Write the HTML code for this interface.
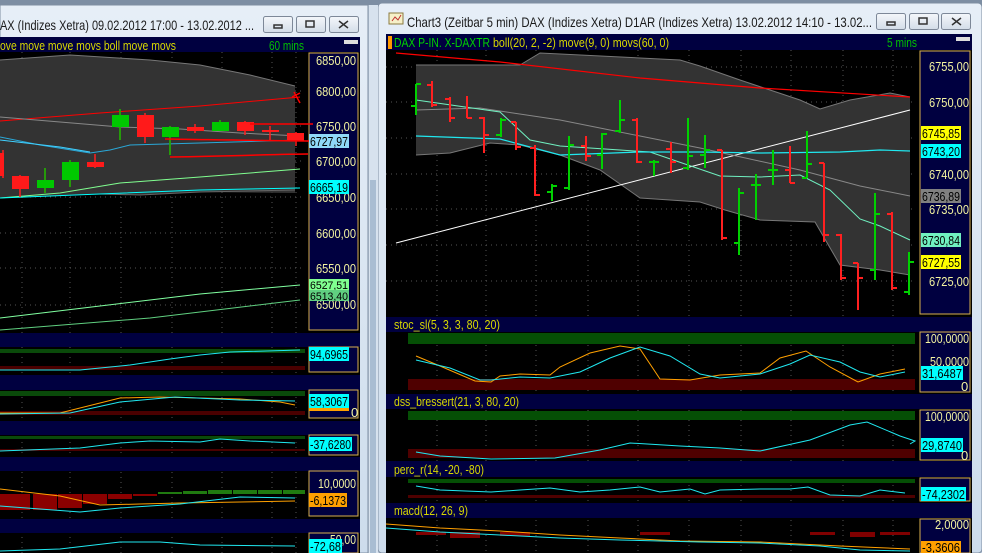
<!DOCTYPE html>
<html><head><meta charset="utf-8"><style>
html,body{margin:0;padding:0;background:#c8d6e4;}
svg{display:block;font-family:"Liberation Sans",sans-serif;}
</style></head><body>
<svg width="982" height="553" viewBox="0 0 982 553" xmlns="http://www.w3.org/2000/svg">
<defs>
<linearGradient id="fr" x1="0" y1="0" x2="0" y2="1"><stop offset="0" stop-color="#e6eef7"/><stop offset="1" stop-color="#cddcec"/></linearGradient>
<linearGradient id="bt" x1="0" y1="0" x2="0" y2="1"><stop offset="0" stop-color="#f4f7fb"/><stop offset="1" stop-color="#d3dde8"/></linearGradient>
</defs>
<rect x="0" y="0" width="982" height="553" fill="#bccadb"/>
<rect x="0" y="0" width="982" height="5" fill="#7d8ea3"/>
<rect x="0" y="5" width="368" height="548" fill="url(#fr)" stroke="#7e8ea2"/>
<rect x="378" y="3" width="604" height="550" rx="4" fill="url(#fr)" stroke="#7e8ea2"/>
<rect x="369" y="5" width="9" height="548" fill="#d7e2ee"/>
<rect x="370" y="180" width="6" height="373" fill="#a9bdd2"/>
<text x="0" y="30" font-size="14" fill="#1a1a1a" textLength="254" lengthAdjust="spacingAndGlyphs">AX (Indizes Xetra) 09.02.2012 17:00 - 13.02.2012 ...</text>
<text x="407" y="27" font-size="14" fill="#1a1a1a" textLength="465" lengthAdjust="spacingAndGlyphs">Chart3 (Zeitbar 5 min)  DAX (Indizes Xetra) D1AR (Indizes Xetra) 13.02.2012 14:10 - 13.02...</text>
<g stroke="#7d8898" fill="url(#bt)">
<rect x="263.5" y="16.5" width="29" height="16" rx="2"/><rect x="296.5" y="16.5" width="29" height="16" rx="2"/><rect x="329.5" y="16.5" width="29" height="16" rx="2"/>
<rect x="876.5" y="13.5" width="29" height="16" rx="2"/><rect x="909.5" y="13.5" width="29" height="16" rx="2"/><rect x="941.5" y="13.5" width="29" height="16" rx="2"/>
</g>
<g stroke="#333" fill="none" stroke-width="1.5">
<rect x="274" y="25" width="8" height="3"/><rect x="306" y="21" width="8" height="6"/><path d="M339 21l9 7M348 21l-9 7"/>
<rect x="887" y="22" width="8" height="3"/><rect x="919" y="18" width="8" height="6"/><path d="M952 18l9 7M961 18l-9 7"/>
</g>
<rect x="389" y="13" width="14" height="11" fill="#f6f0c8" stroke="#8a7a40"/><path d="M392 21l3-4 3 3 3-5" stroke="#c03030" fill="none"/>

<rect x="0" y="37" width="360" height="516" fill="#000"/>
<rect x="0" y="37" width="360" height="15" fill="#000040"/>
<text x="0" y="50" font-size="13" fill="#d8d800" textLength="176" lengthAdjust="spacingAndGlyphs">ove move move movs boll move movs</text>
<text x="269" y="50" font-size="13" fill="#00c000" textLength="35" lengthAdjust="spacingAndGlyphs">60 mins</text>
<rect x="344" y="40" width="14" height="4" fill="#ddd"/>
<rect x="309" y="53" width="49" height="277" fill="#000040" stroke="#d8b050"/>
<g stroke="#555" stroke-dasharray="1,4">
<path d="M22 52V553M70 52V553M121 52V553M172 52V553M222 52V553M272 52V553M296 52V553"/>
<path d="M0 91H305M0 126H305M0 161H305M0 197H305M0 233H305M0 268H305M0 305H305"/>
</g>
<path d="M0 60 L40 57 L70 55 L150 60 L200 65 L250 75 L295 86 V193 L200 192 L140 195 L100 194 L60 196 L0 198 Z" fill="#333"/>
<path d="M0 60 L70 55 L150 60 L200 65 L250 75 L295 86" stroke="#777" fill="none"/>
<path d="M100 194 L140 195 L200 192 L295 190" stroke="#666" fill="none"/>
<path d="M0 121 L100 113 L200 106 L300 97" stroke="#ff0000" fill="none"/>
<path d="M0 117 L60 122 L120 127 L180 129 L240 133 L300 136" stroke="#888" fill="none"/>
<path d="M0 137 L40 145 L90 153 L110 150 L130 145 L200 143 L300 140" stroke="#2aa8d8" fill="none"/>
<path d="M0 140 L60 147 L90 152" stroke="#40d0ff" fill="none"/>
<path d="M0 198 L60 193 L120 183 L200 177 L300 169" stroke="#80ff90" fill="none"/>
<path d="M0 198 L100 194 L200 190 L300 188" stroke="#00ffff" fill="none"/>
<path d="M0 318 L100 306 L200 294 L300 285" stroke="#80ffa0" fill="none"/>
<path d="M0 330 L150 318 L300 300" stroke="#60d080" fill="none"/>
<g stroke-width="1.5">
<path d="M3 150V178M20 175V197M45 168V193M70 160V187M95 154V168M120 109V140M145 113V143M170 126V155M195 124V133M220 120V131M245 121V135M270 126V140M296 132V146" stroke="#ff2020"/>
<path d="M45 168V193M70 160V187M120 109V140M170 126V155M220 120V131" stroke="#00c000"/>
</g>
<g fill="#ff1a1a">
<rect x="0" y="153" width="4" height="23"/><rect x="12" y="176" width="17" height="13"/><rect x="87" y="162" width="17" height="5"/>
<rect x="137" y="115" width="17" height="22"/><rect x="187" y="127" width="17" height="4"/><rect x="237" y="122" width="17" height="9"/>
<rect x="262" y="130" width="17" height="2"/><rect x="287" y="133" width="17" height="8"/>
</g>
<g fill="#00c800">
<rect x="37" y="180" width="17" height="8"/><rect x="62" y="162" width="17" height="18"/><rect x="112" y="115" width="17" height="12"/>
<rect x="162" y="127" width="17" height="10"/><rect x="212" y="122" width="17" height="9"/>
</g>
<g stroke="#ff0000" fill="none" stroke-width="1.5">
<path d="M250 124 C280 124 300 124 313 124"/><path d="M165 139 C230 140 280 141 318 141"/><path d="M170 157 C240 156 280 154 308 154"/><path d="M292 97 l8 -4 M294 92 l6 11"/>
</g>
<g font-size="13" fill="#f4f4a0">
<text x="316" y="65" textLength="40" lengthAdjust="spacingAndGlyphs">6850,00</text>
<text x="316" y="96" textLength="40" lengthAdjust="spacingAndGlyphs">6800,00</text>
<text x="316" y="131" textLength="40" lengthAdjust="spacingAndGlyphs">6750,00</text>
<text x="316" y="166" textLength="40" lengthAdjust="spacingAndGlyphs">6700,00</text>
<text x="316" y="202" textLength="40" lengthAdjust="spacingAndGlyphs">6650,00</text>
<text x="316" y="238" textLength="40" lengthAdjust="spacingAndGlyphs">6600,00</text>
<text x="316" y="273" textLength="40" lengthAdjust="spacingAndGlyphs">6550,00</text>
<text x="316" y="309" textLength="40" lengthAdjust="spacingAndGlyphs">6500,00</text>
</g>
<rect x="309" y="134" width="40" height="14" fill="#8fd8f8"/><text x="310" y="146" font-size="13" fill="#000" textLength="38" lengthAdjust="spacingAndGlyphs">6727,97</text>
<rect x="309" y="180" width="40" height="14" fill="#00ffff"/><text x="310" y="192" font-size="13" fill="#000" textLength="38" lengthAdjust="spacingAndGlyphs">6665,19</text>
<rect x="309" y="279" width="40" height="11" fill="#80ff90"/><text x="310" y="289" font-size="11" fill="#000" textLength="38" lengthAdjust="spacingAndGlyphs">6527,51</text>
<rect x="309" y="290" width="40" height="11" fill="#60d080"/><text x="310" y="300" font-size="11" fill="#000" textLength="38" lengthAdjust="spacingAndGlyphs">6513,40</text>

<g fill="#000040"><rect x="0" y="333" width="360" height="14"/><rect x="0" y="375" width="360" height="15"/><rect x="0" y="421" width="360" height="14"/><rect x="0" y="457" width="360" height="14"/><rect x="0" y="519" width="360" height="14"/></g>
<g fill="#000040" stroke="#d8b050"><rect x="309" y="347" width="49" height="25"/><rect x="309" y="390" width="49" height="28"/><rect x="309" y="435" width="49" height="20"/><rect x="309" y="471" width="49" height="45"/><rect x="309" y="533" width="49" height="20"/></g>
<g fill="#0a4a0a"><rect x="0" y="349" width="305" height="4"/><rect x="0" y="391" width="305" height="5"/><rect x="0" y="436" width="305" height="3"/></g>
<g fill="#4a0000"><rect x="0" y="366" width="305" height="4"/><rect x="0" y="411" width="305" height="4"/><rect x="0" y="449" width="305" height="2"/></g>
<path d="M0 370 L80 370 L130 365 L170 359 L200 355 L230 352 L300 350" stroke="#20e8f0" fill="none"/>
<path d="M0 413 L60 413 L120 398 L160 397 L240 399 L280 402 L295 405" stroke="#ffa000" fill="none"/>
<path d="M0 414 L70 413 L120 402 L175 397 L240 400 L295 401" stroke="#20e8f0" fill="none"/>
<path d="M0 451 L80 448 L120 443 L150 441 L200 442 L220 439 L250 441 L295 443" stroke="#20e8f0" fill="none"/>
<g fill="#8b0000"><rect x="0" y="494" width="30" height="16"/><rect x="33" y="494" width="24" height="16"/><rect x="58" y="494" width="24" height="14"/><rect x="83" y="494" width="24" height="10"/><rect x="108" y="494" width="24" height="5"/><rect x="133" y="494" width="24" height="2"/></g>
<g fill="#207a10"><rect x="158" y="492" width="24" height="2"/><rect x="183" y="491" width="24" height="3"/><rect x="208" y="490" width="24" height="4"/><rect x="233" y="490" width="24" height="4"/><rect x="258" y="490" width="24" height="4"/><rect x="283" y="490" width="22" height="4"/></g>
<path d="M0 489 L60 496 L100 505 L140 504 L180 503 L240 502 L295 501" stroke="#ffa000" fill="none"/>
<path d="M0 506 L80 512 L120 508 L180 504 L240 497 L295 498" stroke="#20e8f0" fill="none"/>
<path d="M0 551 L60 549 L120 542 L160 542 L200 545 L295 546" stroke="#20e8f0" fill="none"/>
<g font-size="13" fill="#f4f4a0">
<text x="318" y="488" textLength="38" lengthAdjust="spacingAndGlyphs">10,0000</text>
<text x="330" y="544" textLength="26" lengthAdjust="spacingAndGlyphs">50,00</text>
<text x="351" y="417">0</text>
</g>
<rect x="309" y="347" width="40" height="14" fill="#00ffff"/><text x="310" y="359" font-size="13" textLength="38" lengthAdjust="spacingAndGlyphs">94,6965</text>
<rect x="309" y="394" width="40" height="14" fill="#00ffff"/><text x="310" y="406" font-size="13" textLength="38" lengthAdjust="spacingAndGlyphs">58,3067</text>
<rect x="309" y="408" width="40" height="3" fill="#ffa000"/>
<rect x="309" y="437" width="43" height="14" fill="#00ffff"/><text x="310" y="449" font-size="13" textLength="41" lengthAdjust="spacingAndGlyphs">-37,6280</text>
<rect x="309" y="493" width="38" height="14" fill="#ffa000"/><text x="310" y="505" font-size="13" textLength="36" lengthAdjust="spacingAndGlyphs">-6,1373</text>
<rect x="309" y="539" width="33" height="14" fill="#00ffff"/><text x="310" y="551" font-size="13" textLength="31" lengthAdjust="spacingAndGlyphs">-72,68</text>

<rect x="386" y="34" width="586" height="519" fill="#000"/>
<rect x="386" y="34" width="586" height="16" fill="#000040"/>
<rect x="388" y="36" width="4" height="13" fill="#ff9900"/>
<text x="394" y="47" font-size="13" fill="#00d000" textLength="96" lengthAdjust="spacingAndGlyphs">DAX P-IN. X-DAXTR</text>
<text x="493" y="47" font-size="13" fill="#d8d800" textLength="176" lengthAdjust="spacingAndGlyphs">boll(20, 2, -2) move(9, 0) movs(60, 0)</text>
<text x="887" y="47" font-size="13" fill="#00c000" textLength="30" lengthAdjust="spacingAndGlyphs">5 mins</text>
<rect x="956" y="37" width="14" height="4" fill="#ddd"/>
<rect x="920" y="51" width="50" height="263" fill="#000040" stroke="#d8b050"/>
<g stroke="#555" stroke-dasharray="1,4">
<path d="M437 50V553M486 50V553M536 50V553M588 50V553M638 50V553M689 50V553M741 50V553M791 50V553M843 50V553M893 50V553"/>
<path d="M386 67H915M386 102H915M386 138H915M386 174H915M386 209H915M386 245H915M386 281H915"/>
</g>
<path d="M416 65 L520 65 L540 53 L680 60 L700 66 L740 80 L800 100 L820 109 L850 100 L890 93 L910 97 V275 L880 270 L840 265 L815 222 L760 220 L725 210 L700 202 L670 200 L640 198 L600 170 L560 155 L520 145 L490 143 L450 153 L416 155 Z" fill="#333"/>
<path d="M416 65 L520 65 L540 53 L680 60 L700 66 L740 80 L800 100 L820 109 L850 100 L890 93 L910 97" stroke="#777" fill="none"/>
<path d="M416 155 L450 153 L490 143 L520 145 L560 155 L600 170 L640 198 L670 200 L700 202 L725 210 L760 220 L815 222 L840 265 L880 270 L910 275" stroke="#777" fill="none"/>
<path d="M396 53 L500 62 L640 78 L760 88 L910 97" stroke="#ff0000" fill="none" stroke-width="1.2"/>
<path d="M396 243 L910 110" stroke="#ffffff" fill="none"/>
<path d="M416 110 L480 108 L560 120 L640 136 L700 148 L800 170 L860 186 L910 196" stroke="#888" fill="none"/>
<path d="M416 100 L500 112 L530 140 L560 146 L620 150 L650 152 L720 176 L760 177 L800 175 L830 190 L860 219 L880 226 L910 240" stroke="#70f0c0" fill="none"/>
<path d="M416 136 L500 139 L560 155 L640 152 L700 152 L760 153 L840 152 L880 150 L910 151" stroke="#20e8f0" fill="none" stroke-width="1.2"/>
<g stroke-width="2" fill="none">
<path stroke="#00d000" d="M416 84V115M416 106h-5M416 84h5 M501 118V137M501 135h-5M501 120h5 M552 184V201M552 192h-5M552 186h5 M569 136V190M569 188h-5M569 145h5 M602 133V169M602 155h-5M602 134h5 M620 100V133M620 131h-5M620 120h5 M654 160V176M654 162h-5M654 162h5 M688 118V170M688 168h-5M688 156h5 M705 135V168M705 155h-5M705 150h5 M739 188V255M739 243h-5M739 193h5 M756 174V220M756 185h-5M756 185h5 M773 150V185M773 170h-5M773 170h5 M807 131V178M807 178h-5M807 164h5 M875 193V280M875 270h-5M875 214h5 M909 252V295M909 292h-5M909 262h5"/>
<path stroke="#ff2020" d="M432 81V107M432 85h-5M432 105h5 M450 97V122M450 99h-5M450 118h5 M467 96V118M467 118h5 M484 117V153M484 118h-5M484 135h5 M516 122V150M516 122h-5M516 147h5 M535 145V196M535 148h-5M535 195h5 M586 136V161M586 146h-5M586 156h5 M637 118V163M637 120h-5M637 162h5 M671 142V173M671 149h-5M671 162h5 M722 150V240M722 150h-5M722 238h5 M790 146V183M790 170h-5M790 183h5 M824 163V242M824 163h-5M824 235h5 M841 234V280M841 235h-5M841 278h5 M858 263V310M858 263h-5M858 278h5 M892 212V290M892 214h-5M892 288h5"/>
</g>
<g font-size="13" fill="#f4f4a0">
<text x="929" y="71" textLength="40" lengthAdjust="spacingAndGlyphs">6755,00</text>
<text x="929" y="107" textLength="40" lengthAdjust="spacingAndGlyphs">6750,00</text>
<text x="929" y="179" textLength="40" lengthAdjust="spacingAndGlyphs">6740,00</text>
<text x="929" y="214" textLength="40" lengthAdjust="spacingAndGlyphs">6735,00</text>
<text x="929" y="286" textLength="40" lengthAdjust="spacingAndGlyphs">6725,00</text>
</g>
<rect x="921" y="126" width="40" height="14" fill="#ffff00"/><text x="922" y="138" font-size="13" textLength="38" lengthAdjust="spacingAndGlyphs">6745,85</text>
<rect x="921" y="144" width="40" height="14" fill="#00ffff"/><text x="922" y="156" font-size="13" textLength="38" lengthAdjust="spacingAndGlyphs">6743,20</text>
<rect x="921" y="189" width="40" height="14" fill="#808080"/><text x="922" y="201" font-size="13" textLength="38" lengthAdjust="spacingAndGlyphs">6736,89</text>
<rect x="921" y="233" width="40" height="14" fill="#70f0c0"/><text x="922" y="245" font-size="13" textLength="38" lengthAdjust="spacingAndGlyphs">6730,84</text>
<rect x="921" y="255" width="40" height="14" fill="#ffff00"/><text x="922" y="267" font-size="13" textLength="38" lengthAdjust="spacingAndGlyphs">6727,55</text>

<g fill="#000040"><rect x="386" y="317" width="586" height="15"/><rect x="386" y="394" width="586" height="15"/><rect x="386" y="461" width="586" height="16"/><rect x="386" y="503" width="586" height="15"/></g>
<g font-size="13" fill="#d8d800">
<text x="394" y="329" textLength="106" lengthAdjust="spacingAndGlyphs">stoc_sl(5, 3, 3, 80, 20)</text>
<text x="394" y="406" textLength="125" lengthAdjust="spacingAndGlyphs">dss_bressert(21, 3, 80, 20)</text>
<text x="394" y="474" textLength="90" lengthAdjust="spacingAndGlyphs">perc_r(14, -20, -80)</text>
<text x="394" y="515" textLength="74" lengthAdjust="spacingAndGlyphs">macd(12, 26, 9)</text>
</g>
<g fill="#000040" stroke="#d8b050"><rect x="920" y="332" width="50" height="60"/><rect x="920" y="410" width="50" height="50"/><rect x="920" y="478" width="50" height="23"/><rect x="920" y="519" width="50" height="34"/></g>
<g fill="#054f05"><rect x="408" y="333" width="507" height="11"/><rect x="408" y="411" width="507" height="9"/><rect x="408" y="479" width="507" height="4"/></g>
<g fill="#4f0000"><rect x="408" y="379" width="507" height="11"/><rect x="408" y="449" width="507" height="9"/><rect x="408" y="495" width="507" height="3"/></g>
<path d="M416 356 L440 366 L475 381 L491 382 L500 376 L520 374 L550 375 L560 367 L590 353 L620 346 L640 349 L660 379 L690 380 L720 375 L760 373 L780 358 L806 351 L830 367 L858 382 L880 374 L905 369" stroke="#ffa000" fill="none"/>
<path d="M416 360 L450 368 L480 380 L491 380 L520 377 L550 378 L580 372 L610 358 L640 347 L670 356 L700 374 L720 378 L760 374 L790 364 L810 355 L840 362 L860 372 L880 377 L905 372" stroke="#20e8f0" fill="none"/>
<path d="M416 452 L440 456 L491 459 L555 458 L600 450 L630 443 L680 446 L720 448 L760 451 L810 440 L850 425 L867 422 L900 436 L915 441 L910 444" stroke="#20e8f0" fill="none"/>
<path d="M416 486 L440 490 L491 492 L520 490 L550 488 L580 492 L610 490 L640 487 L660 492 L690 489 L705 494 L720 490 L760 489 L790 489 L808 487 L830 495 L860 496 L880 490 L905 493" stroke="#20e8f0" fill="none"/>
<g fill="#800000"><rect x="416" y="532" width="30" height="3"/><rect x="450" y="532" width="30" height="6"/><rect x="500" y="532" width="30" height="4"/><rect x="640" y="532" width="30" height="3"/><rect x="810" y="532" width="25" height="3"/><rect x="850" y="532" width="25" height="5"/><rect x="880" y="532" width="30" height="3"/></g>
<path d="M386 524 L440 528 L500 531 L560 535 L620 538 L680 541 L760 542 L840 546 L910 549" stroke="#ffa000" fill="none"/>
<path d="M386 528 L440 532 L500 535 L560 538 L620 540 L700 542 L760 543 L820 546 L860 550 L910 551" stroke="#20e8f0" fill="none"/>
<g font-size="13" fill="#f4f4a0">
<text x="925" y="343" textLength="44" lengthAdjust="spacingAndGlyphs">100,0000</text>
<text x="930" y="366" textLength="39" lengthAdjust="spacingAndGlyphs">50,0000</text>
<text x="961" y="391">0</text>
<text x="925" y="421" textLength="44" lengthAdjust="spacingAndGlyphs">100,0000</text>
<text x="961" y="460">0</text>
<text x="935" y="529" textLength="34" lengthAdjust="spacingAndGlyphs">2,0000</text>
</g>
<rect x="921" y="366" width="42" height="14" fill="#00ffff"/><text x="922" y="378" font-size="13" textLength="40" lengthAdjust="spacingAndGlyphs">31,6487</text>
<rect x="921" y="438" width="42" height="14" fill="#00ffff"/><text x="922" y="450" font-size="13" textLength="40" lengthAdjust="spacingAndGlyphs">29,8740</text>
<rect x="921" y="487" width="45" height="14" fill="#00ffff"/><text x="922" y="499" font-size="13" textLength="43" lengthAdjust="spacingAndGlyphs">-74,2302</text>
<rect x="921" y="541" width="40" height="12" fill="#ffa000"/><text x="922" y="552" font-size="13" textLength="38" lengthAdjust="spacingAndGlyphs">-3,3606</text>
</svg>
</body></html>
